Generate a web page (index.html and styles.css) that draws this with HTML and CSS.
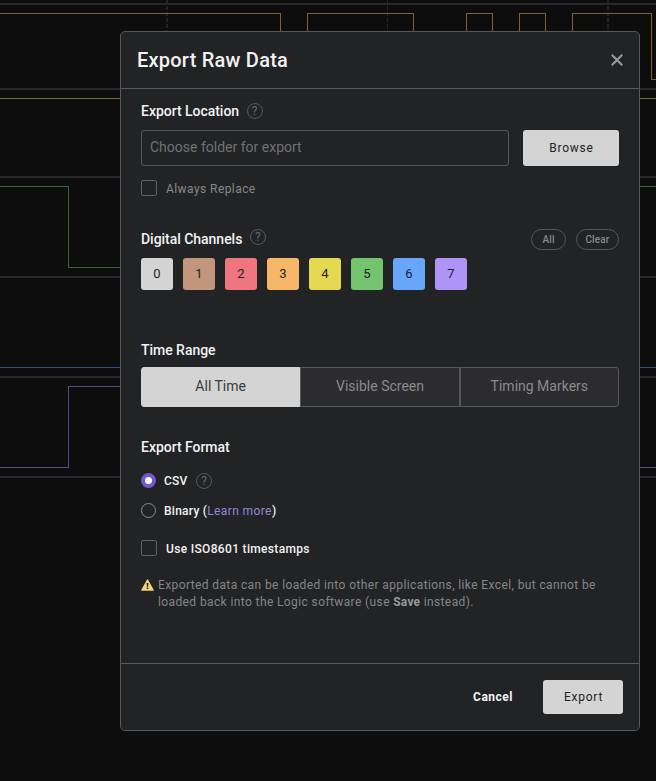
FILE: index.html
```html
<!DOCTYPE html>
<html lang="en">
<head>
<meta charset="utf-8">
<title>Export Raw Data</title>
<link rel="stylesheet" href="styles.css">
</head>
<body>
<svg class="waves" width="656" height="781" viewBox="0 0 656 781" fill="none" shape-rendering="crispEdges" aria-hidden="true">
  <g stroke="#242427" stroke-dasharray="4 2"><path stroke-width="2" d="M167 0V88M608 0V88"/><path d="M387.5 0V88"/></g>
  <path stroke="#29292d" stroke-width="2" d="M0 4H656M0 89H656M0 177H656M0 277H656M0 377H656M0 477H656"/>
  <path stroke="#80602f" d="M0 13.5H280.5V79.5H307.5V13.5H413.5V79.5H466.5V13.5H492.5V79.5H519.5V13.5H545.5V79.5H572.5V13.5H651.5V79.5H656"/>
  <path stroke="#746e24" d="M0 98.5H656"/>
  <path stroke="#38653a" d="M0 186.5H68.5V267.5H400.5V186.5H656"/>
  <path stroke="#35507c" d="M0 367.5H656"/>
  <path stroke="#564a86" d="M0 467.5H68.5V386.5H400.5V467.5H656"/>
</svg>
<main class="modal">
  <header class="modal-header">
    <h1>Export Raw Data</h1>
    <svg class="close" width="14" height="14" viewBox="0 0 14 14"><path d="M1.8 1.8 12.2 12.2M12.2 1.8 1.8 12.2"/></svg>
  </header>
  <div class="modal-body">
    <div class="heading location-heading"><h2>Export Location</h2><span class="help">?</span></div>
    <div class="location">
      <div class="field">Choose folder for export</div>
      <div class="button browse">Browse</div>
    </div>
    <div class="check replace"><span class="box"></span><span class="label">Always Replace</span></div>

    <div class="heading channels-heading">
      <h2>Digital Channels</h2><span class="help raised">?</span>
      <div class="pills"><span class="pill all">All</span><span class="pill clear">Clear</span></div>
    </div>
    <div class="channels">
      <span class="chip c0">0</span><span class="chip c1">1</span><span class="chip c2">2</span><span class="chip c3">3</span><span class="chip c4">4</span><span class="chip c5">5</span><span class="chip c6">6</span><span class="chip c7">7</span>
    </div>

    <h2 class="range-heading">Time Range</h2>
    <div class="segments">
      <span class="segment selected">All Time</span><span class="segment">Visible Screen</span><span class="segment">Timing Markers</span>
    </div>

    <h2 class="format-heading">Export Format</h2>
    <div class="option"><span class="radio on"></span><span>CSV</span><span class="help">?</span></div>
    <div class="option binary"><span class="radio"></span><span>Binary (<a>Learn more</a>)</span></div>
    <div class="check iso"><span class="box"></span><span class="label">Use ISO8601 timestamps</span></div>
    <div class="note">
      <svg width="13" height="12" viewBox="0 0 13 12"><path fill="#f3d37b" d="M6.5.3Q6.9.3 7.2.9L12.8 11Q13 11.8 12.3 11.8H.7Q0 11.8.2 11L5.8.9Q6.1.3 6.5.3Z"/><path fill="#222325" d="M5.6 4H7.4L7.1 7.8H5.9ZM5.7 8.6H7.3V10.1H5.7Z"/></svg>
      <p>Exported data can be loaded into other applications, like Excel, but cannot be loaded back into the Logic software (use <b>Save</b> instead).</p>
    </div>
  </div>
  <footer class="modal-footer">
    <span class="cancel">Cancel</span>
    <div class="button export">Export</div>
  </footer>
</main>
</body>
</html>
```
FILE: styles.css
```css
* { box-sizing: border-box; }
body { margin: 0; height: 781px; overflow: hidden; background: #0d0d0d; font-family: Roboto, sans-serif; color: #f2f2f2; padding: 31px 0 0 120px; }
h1, h2, p { margin: 0; }
.waves { position: absolute; left: 0; top: 0; }
.modal { position: relative; width: 520px; height: 700px; display: flex; flex-direction: column; background: #222325; border: 1px solid #57585b; border-radius: 5px; }
.modal-header { height: 57px; flex: none; display: flex; align-items: center; justify-content: space-between; padding: 0 15px 0 16px; border-bottom: 1px solid #57585b; }
h1 { font-size: 20px; line-height: 24px; font-weight: 500; letter-spacing: 0.23px; }
.close { stroke: #9c9c9d; stroke-width: 2; }
.modal-body { flex: 1; padding: 12px 20px 0; }
h2 { font-size: 14px; line-height: 20px; font-weight: 500; letter-spacing: -0.03px; }
.heading { display: flex; align-items: center; height: 20px; }
.help { width: 16px; height: 16px; flex: none; border: 1px solid #58595b; border-radius: 50%; color: #66676a; font-size: 12px; line-height: 14px; font-weight: 400; letter-spacing: 0; text-align: center; margin-left: 7.5px; }
.raised { margin-bottom: 4px; }
.location { display: flex; gap: 14px; margin-top: 9px; }
.field { width: 368px; height: 36px; border: 1px solid #57585b; border-radius: 3px; padding: 0 8px; font-size: 14px; line-height: 32px; color: #717172; }
.button { background: #d4d4d4; color: #222325; border-radius: 3px; text-align: center; font-size: 12px; letter-spacing: 0.75px; }
.browse { width: 96px; height: 36px; line-height: 36px; padding-left: 1px; }
.check { display: flex; align-items: center; gap: 9px; height: 16px; font-size: 12px; font-weight: 500; }
.label { padding-top: 2px; }
.box { width: 16px; height: 16px; border: 1px solid #616164; border-radius: 2px; }
.replace { margin-top: 14px; color: #88898a; font-weight: 400; letter-spacing: 0.43px; }
.channels-heading { margin-top: 33px; }
.pills { display: flex; gap: 10px; margin-left: auto; }
.pill { height: 21px; border: 1px solid #57585b; border-radius: 11px; color: #88898a; font-size: 10px; font-weight: 500; line-height: 19px; text-align: center; letter-spacing: 0.15px; }
.all { width: 35px; }
.clear { width: 43px; }
.channels { display: flex; gap: 10px; margin-top: 9px; }
.chip { width: 32px; height: 32px; border-radius: 3px; color: #222325; font-size: 13px; line-height: 32px; text-align: center; }
.c0 { background: #d4d4d4; }
.c1 { background: #c1967c; }
.c2 { background: #ef7680; }
.c3 { background: #f6b868; }
.c4 { background: #e4d951; }
.c5 { background: #74c36e; }
.c6 { background: #68a6fa; }
.c7 { background: #ae94f7; }
.range-heading { margin-top: 50px; }
.segments { display: flex; height: 40px; margin-top: 7px; }
.segment { flex: 1; border: 1px solid #57585b; background: #2c2c2e; color: #8a8a8b; font-size: 14px; line-height: 36px; text-align: center; }
.segment:last-child { border-radius: 0 3px 3px 0; }
.selected { background: #d4d4d4; border-color: #d4d4d4; color: #3a3b3d; border-radius: 3px 0 0 3px; }
.format-heading { margin-top: 30px; }
.option { display: flex; align-items: center; height: 15px; margin-top: 16px; font-size: 12px; font-weight: 500; letter-spacing: 0.25px; }
.option .help { margin: 1px 0 0 8.5px; }
.binary { margin-top: 15px; }
.option a { color: #9a83db; font-weight: 400; letter-spacing: 0.4px; }
.radio { width: 15px; height: 15px; flex: none; margin-right: 8px; border: 1px solid #8d8d8e; border-radius: 50%; }
.on { border: 4px solid #7259cc; background: #fff; }
.iso { margin-top: 22px; letter-spacing: 0.33px; }
.note { display: flex; gap: 4px; margin-top: 20px; color: #858687; font-size: 12px; line-height: 17px; letter-spacing: 0.39px; }
.note svg { flex: none; margin-top: 3px; }
.note p { padding-top: 1px; }
.note b { font-weight: 700; color: #98999a; letter-spacing: 0.2px; }
.modal-footer { height: 67px; border-top: 1px solid #57585b; display: flex; align-items: center; justify-content: flex-end; padding-right: 16px; gap: 30px; }
.cancel { font-size: 12px; font-weight: 700; letter-spacing: 0.5px; }
.export { width: 80px; height: 34px; line-height: 34px; padding-left: 1px; }
```
